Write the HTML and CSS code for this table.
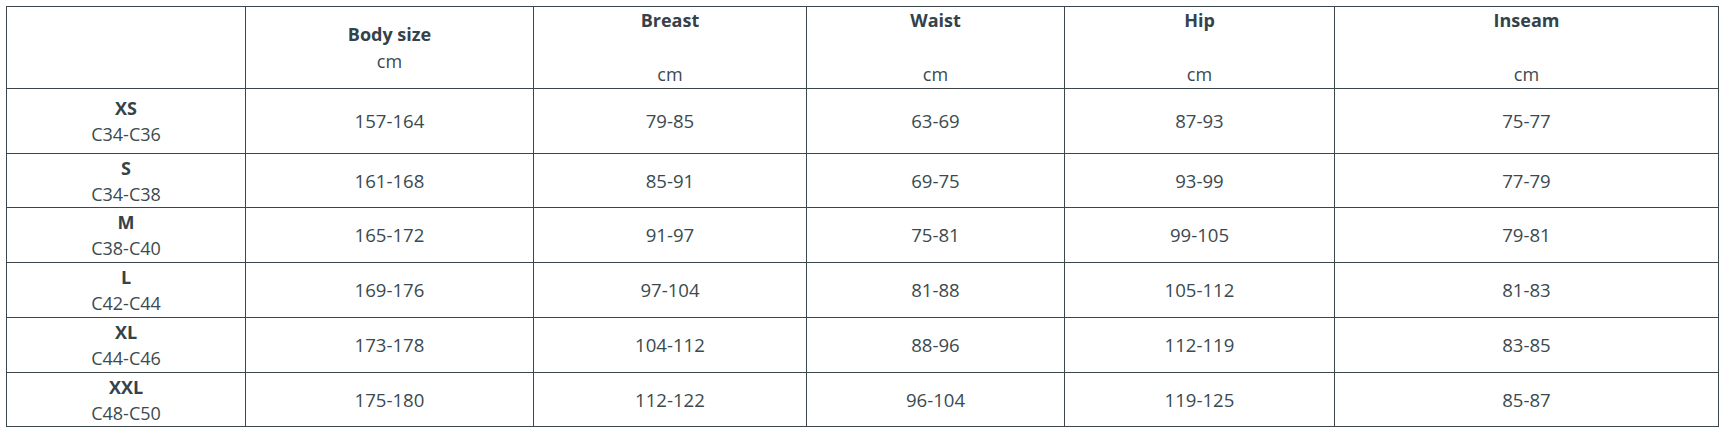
FILE: index.html
```html
<!DOCTYPE html>
<html lang="en">
<head>
<meta charset="utf-8">
<title>Size chart</title>
<link rel="stylesheet" href="styles.css">
</head>
<body>
<table class="size-table">
  <colgroup>
    <col class="c-size">
    <col class="c-body">
    <col class="c-breast">
    <col class="c-waist">
    <col class="c-hip">
    <col class="c-inseam">
  </colgroup>
  <thead>
    <tr class="head-row">
      <th></th>
      <th><span class="label">Body size</span><br><span class="unit">cm</span></th>
      <th><span class="label">Breast</span><br><br><span class="unit">cm</span></th>
      <th><span class="label">Waist</span><br><br><span class="unit">cm</span></th>
      <th><span class="label">Hip</span><br><br><span class="unit">cm</span></th>
      <th><span class="label">Inseam</span><br><br><span class="unit">cm</span></th>
    </tr>
  </thead>
  <tbody>
    <tr class="row-first">
      <td><span class="label">XS</span><br>C34-C36</td>
      <td class="val">157-164</td><td class="val">79-85</td><td class="val">63-69</td><td class="val">87-93</td><td class="val">75-77</td>
    </tr>
    <tr class="row-a">
      <td><span class="label">S</span><br>C34-C38</td>
      <td class="val">161-168</td><td class="val">85-91</td><td class="val">69-75</td><td class="val">93-99</td><td class="val">77-79</td>
    </tr>
    <tr class="row-b">
      <td><span class="label">M</span><br>C38-C40</td>
      <td class="val">165-172</td><td class="val">91-97</td><td class="val">75-81</td><td class="val">99-105</td><td class="val">79-81</td>
    </tr>
    <tr class="row-b">
      <td><span class="label">L</span><br>C42-C44</td>
      <td class="val">169-176</td><td class="val">97-104</td><td class="val">81-88</td><td class="val">105-112</td><td class="val">81-83</td>
    </tr>
    <tr class="row-b">
      <td><span class="label">XL</span><br>C44-C46</td>
      <td class="val">173-178</td><td class="val">104-112</td><td class="val">88-96</td><td class="val">112-119</td><td class="val">83-85</td>
    </tr>
    <tr class="row-a">
      <td><span class="label">XXL</span><br>C48-C50</td>
      <td class="val">175-180</td><td class="val">112-122</td><td class="val">96-104</td><td class="val">119-125</td><td class="val">85-87</td>
    </tr>
  </tbody>
</table>
</body>
</html>
```

FILE: styles.css
```css
html, body {
  margin: 0;
  padding: 0;
  background: #ffffff;
}

body {
  padding: 6px 0 0 6px;
  font-family: "Open Sans", "Liberation Sans", sans-serif;
  color: #3b4a50;
}

.size-table {
  border-collapse: collapse;
  table-layout: fixed;
  width: 1713px;
  font-size: 18px;
}

.c-size { width: 239px; }
.c-body { width: 288px; }
.c-breast { width: 273px; }
.c-waist { width: 258px; }
.c-hip { width: 270px; }
.c-inseam { width: 384px; }

.size-table th,
.size-table td {
  border: 1px solid #3c474b;
  padding: 0;
  text-align: center;
  vertical-align: middle;
  font-weight: 400;
  line-height: 26px;
}

.size-table th {
  line-height: 27px;
}

.size-table td.val {
  font-size: 18.6px;
}

.label {
  font-weight: 700;
  color: #34424a;
}

.head-row { height: 82px; }
.row-first { height: 65px; }
.row-a { height: 54px; }
.row-b { height: 55px; }
```
